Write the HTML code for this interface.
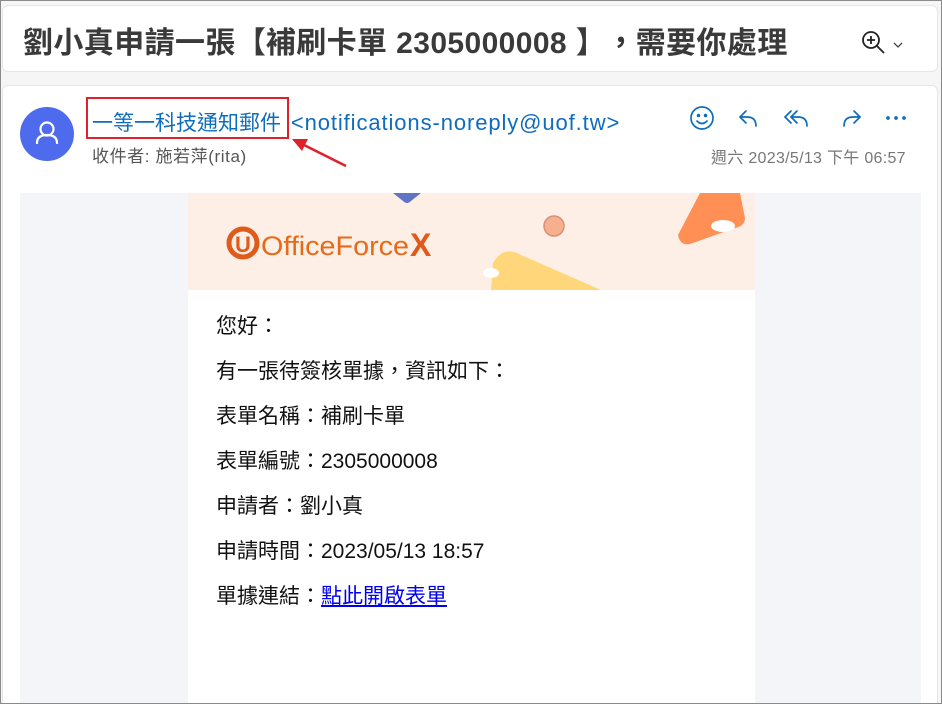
<!DOCTYPE html>
<html><head><meta charset="utf-8"><style>
*{margin:0;padding:0;box-sizing:border-box}
html,body{width:942px;height:704px;overflow:hidden}
body{background:#f6f6f6;font-family:"Liberation Sans","Noto Sans CJK TC",sans-serif;position:relative}
.frame{position:absolute;left:0;top:0;width:942px;height:704px;border:1px solid #8a8a8a;z-index:9;pointer-events:none}
.t{position:absolute;left:2px;top:5px;width:936px;height:67px;background:#fff;border:1px solid #e6e6e6;border-radius:6px}
.t h1{position:absolute;left:20px;top:12px;font-size:30px;font-weight:bold;color:#3a3a3a;letter-spacing:.4px;white-space:nowrap}
.p{display:inline-block;width:1em;text-align:center}
.c{position:absolute;left:2px;top:85px;width:936px;height:640px;background:#fff;border:1px solid #e6e6e6;border-radius:6px}
.av{position:absolute;left:20px;top:107px;width:54px;height:54px;border-radius:50%;background:#4f6bed}
.nm{position:absolute;left:92px;top:107px;font-size:21px;color:#0f6cbd;white-space:nowrap}
.em{letter-spacing:.9px;font-size:22px}
.box{position:absolute;left:86px;top:97px;width:203px;height:42px;border:2px solid #e0202a}
.to{position:absolute;left:92px;top:142px;font-size:17px;color:#555;letter-spacing:.6px;white-space:nowrap}
.dt{position:absolute;left:711px;top:144px;font-size:16px;color:#777;white-space:nowrap;letter-spacing:.3px}
.gr{position:absolute;left:20px;top:193px;width:901px;height:520px;background:#f4f5f9}
.wh{position:absolute;left:188px;top:193px;width:567px;height:520px;background:#fff}
.ban{position:absolute;left:188px;top:193px;width:567px;height:97px;background:#fdeee6;overflow:hidden}
.tx{position:absolute;left:216px;font-size:21px;color:#111;white-space:nowrap;line-height:28px}
a{color:#0000ee}
</style></head><body>
<div class="frame"></div>
<div class="t"><h1>劉小真申請一張<span class="p">【</span>補刷卡單 2305000008 <span class="p">】</span><span class="p">，</span>需要你處理</h1>
<svg style="position:absolute;left:856px;top:24px" width="60" height="30" viewBox="0 0 60 30"><circle cx="12" cy="10" r="8" fill="none" stroke="#222" stroke-width="1.8"/><path d="M18 16l7 7M12 6v8M8 10h8" stroke="#222" stroke-width="1.8"/><path d="M35 13l4 4 4-4" fill="none" stroke="#444" stroke-width="1.3"/></svg></div>
<div class="c"></div>
<div class="av"><svg width="54" height="54" viewBox="0 0 54 54"><circle cx="27" cy="22" r="6.5" fill="none" stroke="#fff" stroke-width="2.2"/><path d="M17 36c0-6 4-8 10-8s10 2 10 8" fill="none" stroke="#fff" stroke-width="2.2" stroke-linecap="round"/></svg></div>
<div class="nm">一等一科技通知郵件 <span class="em" style="margin-left:4px">&lt;notifications-noreply@uof.tw&gt;</span></div>
<div class="box"></div>
<svg style="position:absolute;left:288px;top:136px" width="62" height="34"><path d="M58 30L12 7" stroke="#e0202a" stroke-width="2.5"/><path d="M4 3l16 0-6 12z" fill="#e0202a"/></svg>
<div class="to">收件者: 施若萍(rita)</div>
<svg style="position:absolute;left:688px;top:105px" width="222" height="28" viewBox="0 0 222 28" fill="none" stroke="#0f6cbd" stroke-width="1.7" stroke-linecap="round"><circle cx="14" cy="13" r="11"/><circle cx="10.5" cy="10.5" r=".9" fill="#0f6cbd"/><circle cx="17.5" cy="10.5" r=".9" fill="#0f6cbd"/><path d="M9 16q5 5 10 0"/><path d="M58 6l-6 6 6 6M52 12h7q9 0 9 9"/><path d="M103 6l-6 6 6 6M109 6l-6 6 6 6M103 12h7q9 0 9 9"/><path d="M166 6l6 6-6 6M172 12h-7q-9 0-9 9"/><circle cx="200" cy="13" r="1" fill="#0f6cbd"/><circle cx="208" cy="13" r="1" fill="#0f6cbd"/><circle cx="216" cy="13" r="1" fill="#0f6cbd"/></svg>
<div class="dt">週六 2023/5/13 下午 06:57</div>
<div class="gr"></div><div class="wh"></div>
<div class="ban"><svg width="567" height="97">
<path d="M205 0h28l-10 8q-4 4-8 0z" fill="#5f74c4"/>
<circle cx="366" cy="33" r="10" fill="#f7b08e" stroke="#d8907a" stroke-width="1.5"/>
<path d="M305 70q10-18 28-8l80 35h-110z" fill="#ffd77a"/>
<path d="M490 42l22-42h40l5 25q0 8-10 10l-45 16q-10 2-12-9z" fill="#ff8f55"/>
<ellipse cx="535" cy="33" rx="12" ry="6" fill="#fff"/><ellipse cx="303" cy="80" rx="8" ry="5" fill="#fff"/>
<circle cx="55" cy="50" r="14" fill="none" stroke="#e05a1a" stroke-width="5"/>
<text x="47" y="59" font-family="Liberation Sans" font-size="22" font-weight="bold" fill="#e05a1a">U</text>
<text x="73" y="62" font-family="Liberation Sans" font-size="27" fill="#e66a18" textLength="148" lengthAdjust="spacingAndGlyphs">OfficeForce</text>
<text x="222" y="63" font-family="Liberation Sans" font-size="32" font-weight="bold" fill="#e05a1a">X</text>
</svg></div>
<div class="tx" style="top:313px">您好<span class="p">：</span></div>
<div class="tx" style="top:358px">有一張待簽核單據<span class="p">，</span>資訊如下<span class="p">：</span></div>
<div class="tx" style="top:403px">表單名稱<span class="p">：</span>補刷卡單</div>
<div class="tx" style="top:448px">表單編號<span class="p">：</span>2305000008</div>
<div class="tx" style="top:493px">申請者<span class="p">：</span>劉小真</div>
<div class="tx" style="top:538px">申請時間<span class="p">：</span>2023/05/13 18:57</div>
<div class="tx" style="top:583px">單據連結<span class="p">：</span><a href="#">點此開啟表單</a></div>
</body></html>
